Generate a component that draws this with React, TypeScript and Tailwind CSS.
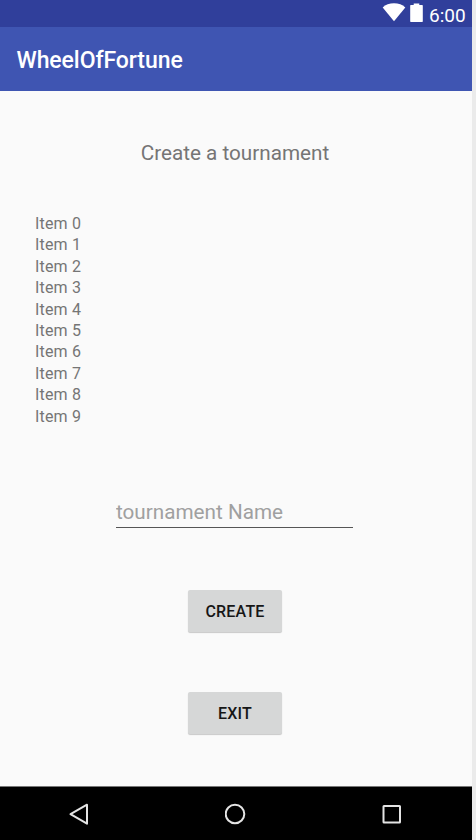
const items = Array.from({ length: 10 }, (_, i) => `Item ${i}`);

function StatusBar() {
  return (
    <div className="flex h-[26.5px] shrink-0 items-start justify-end bg-[#303f9b] pr-[6px] text-white">
      <svg className="mt-[3px] h-[19px] w-[24px]" viewBox="0 0 24 19" fill="currentColor">
        <path d="M12 18.2 0.7 4.4C3.5 1.5 7.5 0.2 12 0.2S20.5 1.5 23.3 4.4Z" />
      </svg>
      <svg className="mt-[3px] ml-[4px] h-[19px] w-[13px]" viewBox="0 0 13 19" fill="currentColor">
        <path d="M3.7 0.5h5.6v1.6h2.9c.4 0 .6.2.6.6v15.600c0 .4-.2.6-.6.6H.8c-.4 0-.6-.2-.6-.6V2.700c0-.4.2-.6.6-.6h2.900z" />
      </svg>
      <span className="mt-[5px] ml-[6px] w-[37px] text-[19px] leading-[22px] whitespace-nowrap">6:00</span>
    </div>
  );
}

function RaisedButton({ label, className }: { label: string; className: string }) {
  return (
    <button
      className={`h-[42px] w-[94px] rounded-[2px] bg-[#d6d7d7] pt-[2px] text-[16px] font-medium tracking-[0.2px] text-[#161616] shadow-[0_1px_1px_rgba(0,0,0,0.2)] ${className}`}
    >
      {label}
    </button>
  );
}

function NavigationBar() {
  return (
    <div className="flex h-[54px] shrink-0 items-center justify-between border-t border-[#777] bg-black pr-[70px] pl-[68px] text-[#e4e4e4]">
      <svg width="22" height="24" viewBox="0 0 22 24" fill="none" stroke="currentColor" strokeWidth="2">
        <path d="M19 2.7V21.7L2.500 12.200Z" strokeLinejoin="round" />
      </svg>
      <svg width="22" height="24" viewBox="0 0 22 24" fill="none" stroke="currentColor" strokeWidth="2">
        <circle cx="10" cy="12" r="9.3" />
      </svg>
      <svg width="20" height="24" viewBox="0 0 20 24" fill="none" stroke="currentColor" strokeWidth="2">
        <rect x="1.5" y="4" width="16.5" height="16.5" rx="0.5" />
      </svg>
    </div>
  );
}

export default function App() {
  return (
    <div className="h-[840px] w-[476px] overflow-hidden bg-[#ebebeb] font-[Roboto,sans-serif]">
      <div className="flex h-full w-[472px] flex-col bg-[#fafafa]">
        <StatusBar />
        <header className="flex h-[64.5px] shrink-0 items-center bg-[#3f55b2] pt-[4px] pl-[16.5px]">
          <h1 className="text-[23px] leading-[27px] font-medium tracking-[-0.08px] text-white">WheelOfFortune</h1>
        </header>
        <main className="flex flex-1 flex-col items-center pr-[2px]">
          <h2 className="mt-[49px] text-[20.7px] leading-[26px] text-[#757575]">Create a tournament</h2>
          <ul className="mt-[47px] self-start pl-[35px] text-[16px] leading-[21.4px] tracking-[0.18px] text-[#757575]">
            {items.map((item) => (
              <li key={item}>{item}</li>
            ))}
          </ul>
          <input
            className="mt-[70px] mr-[1px] h-[31px] w-[237px] border-b border-[#555] bg-transparent pb-[1px] text-[20.7px] leading-[26px] outline-none placeholder:text-[#a0a0a0]"
            placeholder="tournament Name"
          />
          <RaisedButton label="CREATE" className="mt-[62px]" />
          <RaisedButton label="EXIT" className="mt-[60px]" />
        </main>
        <NavigationBar />
      </div>
    </div>
  );
}
